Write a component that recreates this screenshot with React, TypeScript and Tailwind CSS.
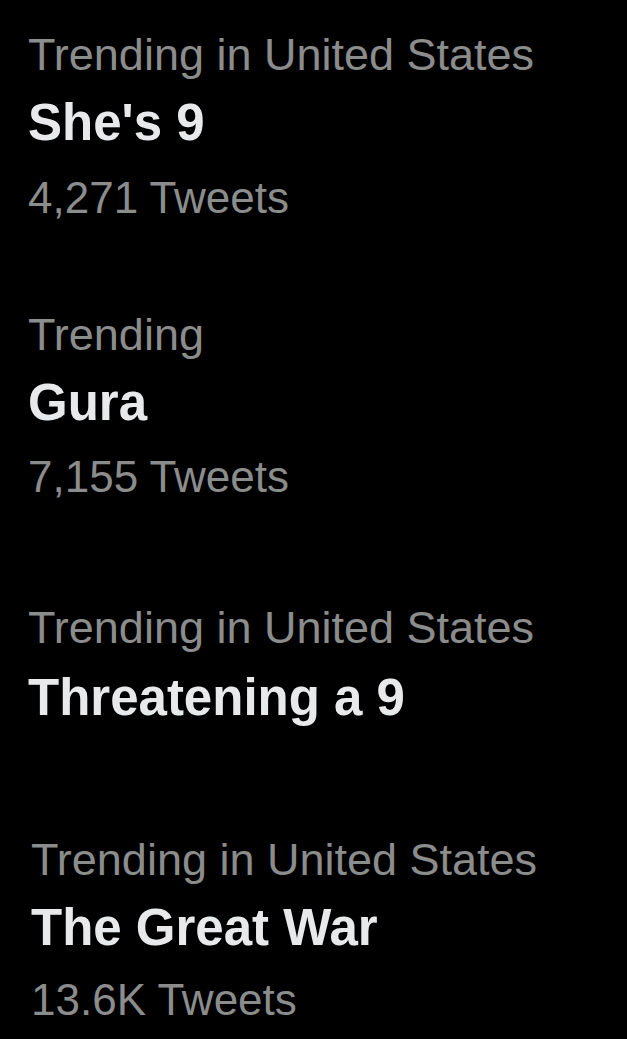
import React from "react";

type Trend = {
  label: string;
  name: string;
  count?: string;
  mt: string;
  nameMt: string;
  countMt: string;
  ml: string;
};

const trends: Trend[] = [
  { label: "Trending in United States", name: "She's 9", count: "4,271 Tweets", mt: "mt-[24px]", nameMt: "mt-[8px]", countMt: "mt-[15px]", ml: "ml-0" },
  { label: "Trending", name: "Gura", count: "7,155 Tweets", mt: "mt-[77px]", nameMt: "mt-[8px]", countMt: "mt-[14px]", ml: "ml-0" },
  { label: "Trending in United States", name: "Threatening a 9", mt: "mt-[91px]", nameMt: "mt-[10px]", countMt: "mt-0", ml: "ml-0" },
  { label: "Trending in United States", name: "The Great War", count: "13.6K Tweets", mt: "mt-[102px]", nameMt: "mt-[8px]", countMt: "mt-[12px]", ml: "ml-[3px]" },
];

export default function App() {
  return (
    <div
      className="w-[627px] h-[1039px] bg-black overflow-hidden pl-[28px]"
      style={{ fontFamily: '"Liberation Sans", Arial, sans-serif' }}
    >
      <div className="pt-px flex flex-col">
        {trends.map((t, i) => (
          <div key={i} className={`flex flex-col ${t.mt} ${t.ml}`}>
            <div className="text-[45px] leading-[60px] text-[#8b8c8c] whitespace-nowrap">
              {t.label}
            </div>
            <div className={`text-[51px] leading-[60px] font-bold text-[#e7e9ea] whitespace-nowrap ${t.nameMt}`}>
              {t.name}
            </div>
            {t.count && (
              <div className={`text-[44px] leading-[60px] text-[#8b8c8c] whitespace-nowrap ${t.countMt}`}>
                {t.count}
              </div>
            )}
          </div>
        ))}
      </div>
    </div>
  );
}
